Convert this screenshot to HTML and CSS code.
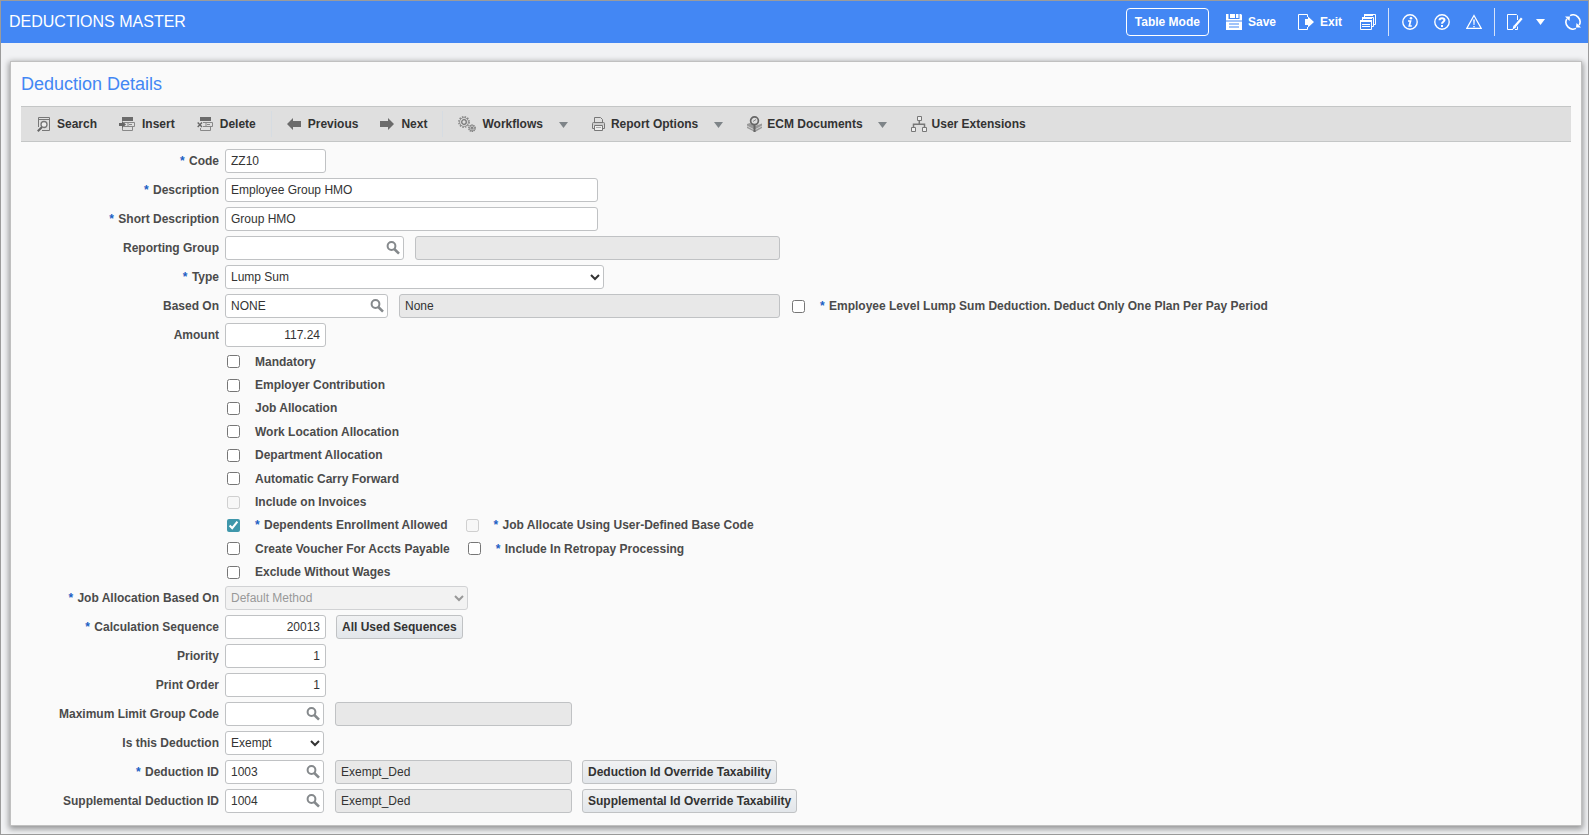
FILE: index.html
```html
<!DOCTYPE html>
<html lang="en">
<head>
<meta charset="utf-8">
<title>Deductions Master</title>
<link rel="stylesheet" href="styles.css">
</head>
<body>
<div class="app">
  <header class="topbar">
    <h1 class="topbar-title">DEDUCTIONS MASTER</h1>
    <nav class="topbar-actions">
      <button class="mode-btn" type="button">Table Mode</button>
      <button class="top-btn" type="button"><svg width="16" height="16" viewBox="0 0 16 16"><path fill="#fff" fill-rule="evenodd" d="M0 0H2.500V5H13.500V0H15L16 1V6.500H0ZM4 0H9V4H4ZM10 0H12.500V4H10ZM0 7.500H16V16H0ZM3 9.500V10.500H13V9.500ZM3 12.500V13.500H13V12.500Z"/></svg>Save</button>
      <button class="top-btn exit" type="button"><svg width="16" height="16" viewBox="0 0 16 16"><path fill="none" stroke="#fff" d="M9.500 3V.5H.5V15.500H9.500V13"/><path fill="#fff" d="M7 5H10V2.500L16 8L10 13.500V11H7Z"/></svg>Exit</button>
      <button class="icon-btn windows" type="button" aria-label="Windows"><svg width="16" height="16" viewBox="0 0 16 16"><path fill="none" stroke="#fff" d="M4.500 4V.5H15.500V10.500H13.500M2.500 6V3.500H13.500V12.500H12"/><path fill="#fff" d="M4 0H13V2H4ZM2 3H12V5H2ZM0 6H12V8H0Z"/><path fill="none" stroke="#fff" d="M.5 6.500V15.500H11.500V6.500M2 10.500H10M2 12.500H10"/></svg></button>
      <span class="top-sep"></span>
      <button class="icon-btn" type="button" aria-label="Information"><svg width="16" height="16" viewBox="0 0 16 16"><circle cx="8" cy="8" r="7.200" fill="none" stroke="#fff" stroke-width="1.400"/><circle cx="9" cy="4.200" r="1.300" fill="#fff"/><path fill="none" stroke="#fff" stroke-width="1.700" d="M6 7H8.500L7.300 12H9.800"/></svg></button>
      <button class="icon-btn" type="button" aria-label="Help"><svg width="16" height="16" viewBox="0 0 16 16"><circle cx="8" cy="8" r="7.200" fill="none" stroke="#fff" stroke-width="1.400"/><path fill="none" stroke="#fff" stroke-width="2" d="M5.500 6.200C5.500 3.400 10.500 3.500 10.500 6.100C10.500 7.800 8 7.700 8 9.800"/><path fill="#fff" d="M7 11H9V13H7Z"/></svg></button>
      <button class="icon-btn" type="button" aria-label="Warnings"><svg width="16" height="16" viewBox="0 0 16 16"><path fill="none" stroke="#fff" stroke-width="1.200" d="M8 1.500L15.200 14.400H.8Z"/><path fill="#fff" d="M7.200 5.500H8.800L8.500 11H7.500ZM7.300 12H8.700V13.200H7.300Z"/></svg></button>
      <span class="top-sep narrow"></span>
      <button class="edit-btn" type="button" aria-label="Edit"><svg width="16" height="16" viewBox="0 0 16 16"><path fill="none" stroke="#fff" d="M10.500 6V1.500L9.500.5H.5V15.500H6"/><path fill="none" stroke="#fff" stroke-width="2.200" d="M7.500 12.800L14.800 4.200"/><path fill="#fff" d="M5.500 15.500L6.500 11.500L9 13.800Z"/><path fill="none" stroke="#fff" d="M8 15.500H10.500V12.500"/></svg><svg class="edit-caret" width="9" height="6" viewBox="0 0 9 6"><path fill="#fff" d="M0 0H9L4.500 6Z"/></svg></button>
      <button class="icon-btn" type="button" aria-label="Refresh"><svg width="16" height="16" viewBox="0 0 16 16"><path fill="none" stroke="#fff" stroke-width="1.600" d="M5 1.600A7 7 0 0 1 14.200 11.200M11 14.400A7 7 0 0 1 1.800 4.800"/><path fill="#fff" d="M16 13.500L11 13.500L11.500 9ZM0 2.500L5 2.500L4.500 7Z"/></svg></button>
    </nav>
  </header>

  <main class="card">
    <h2 class="card-title">Deduction Details</h2>
    <div class="toolbar">
      <button class="tool" type="button"><svg width="13" height="15" viewBox="0 0 13 15"><path fill="none" stroke="#777" d="M1.500 10V.5H12.500V13.500H5"/><path stroke="#777" d="M2 2.500H12"/><circle cx="7" cy="7.500" r="3" fill="#eee" stroke="#777" stroke-width="1.300"/><path stroke="#666" stroke-width="2" d="M5 10L.8 14.200"/></svg>Search</button>
      <button class="tool" type="button"><svg width="16" height="14" viewBox="0 0 16 14"><path fill="#6b6b6b" d="M3 0H14V4H3Z"/><path fill="none" stroke="#888" d="M5 5.500H15.500V9.500H5M3.500 10V13.500H13.500V10M9 5V10M10 7.500H13"/><path fill="#666" d="M0 6H3V4L7 7.500L3 11V9H0Z"/></svg>Insert</button>
      <button class="tool" type="button"><svg width="16" height="14" viewBox="0 0 16 14"><path fill="#6b6b6b" d="M3 0H14V4H3Z"/><path fill="none" stroke="#888" d="M6 5.500H15.500V9.500H6M3.500 11V13.500H13.500V10M9 5V10M10 7.500H13"/><path fill="none" stroke="#666" stroke-width="1.400" d="M.7 5.500L5 10M5 5.500L.7 10"/></svg>Delete</button>
      <span class="tool-sep"></span>
      <button class="tool" type="button"><svg width="14" height="12" viewBox="0 0 14 12"><path fill="#6b6b6b" d="M0 6L6 0V3H14V9H6V12Z"/></svg>Previous</button>
      <button class="tool" type="button"><svg width="14" height="12" viewBox="0 0 14 12"><path fill="#6b6b6b" d="M14 6L8 0V3H0V9H8V12Z"/></svg>Next</button>
      <span class="tool-sep"></span>
      <button class="tool tight" type="button"><svg width="18" height="16" viewBox="0 0 18 16"><circle cx="6" cy="6" r="5.200" fill="none" stroke="#888" stroke-width="1.500" stroke-dasharray="1.500 1.220"/><circle cx="6" cy="6" r="4.400" fill="none" stroke="#888" stroke-width=".8"/><circle cx="6" cy="6" r="2.300" fill="none" stroke="#777" stroke-width="1.300"/><circle cx="14" cy="12.200" r="3.200" fill="none" stroke="#777" stroke-width="1.300" stroke-dasharray="1.300 .71"/><circle cx="14" cy="12.200" r="2.500" fill="none" stroke="#888" stroke-width=".8"/><circle cx="14" cy="12.200" r="1" fill="none" stroke="#666"/></svg>Workflows<svg class="caret" width="9" height="6" viewBox="0 0 9 6"><path fill="#7e8488" d="M0 0H9L4.500 6Z"/></svg></button>
      <button class="tool tight" type="button"><svg width="13" height="14" viewBox="0 0 13 14"><path fill="none" stroke="#777" d="M2.500 5V.5H8.500L10.500 2.500V5M2.500 11.500H.5V6.500Q.5 5.500 1.500 5.500H11.500Q12.500 5.500 12.500 6.500V11.500H10.500"/><path fill="#ccc" d="M1 6H12V8H1Z"/><path fill="#eee" stroke="#777" d="M2.500 8.500H10.500V13.500H2.500Z"/><path stroke="#aaa" d="M4 10.500H9"/></svg>Report Options<svg class="caret" width="9" height="6" viewBox="0 0 9 6"><path fill="#7e8488" d="M0 0H9L4.500 6Z"/></svg></button>
      <button class="tool snug" type="button"><svg width="15" height="16" viewBox="0 0 15 16"><path fill="#999" d="M0 8L3 7L8 10L15 7.500V12L8 16L0 12Z"/><path fill="none" stroke="#ddd" stroke-width=".8" d="M0 10L7.500 14L15 10"/><circle cx="7.500" cy="4.800" r="3.900" fill="#ddd" stroke="#666" stroke-width="1.700"/><path fill="none" stroke="#888" d="M6 5.500L9 3.500"/><path stroke="#666" stroke-width="2" d="M7.500 8.500V16"/></svg>ECM Documents<svg class="caret" width="9" height="6" viewBox="0 0 9 6"><path fill="#7e8488" d="M0 0H9L4.500 6Z"/></svg></button>
      <button class="tool snug" type="button"><svg width="16" height="16" viewBox="0 0 16 16"><path fill="#eee" stroke="#777" d="M6.500.5H10.500V4.500H6.500ZM.5 11.500H4.500V15.500H.5ZM11.500 11.500H15.500V15.500H11.500Z"/><path fill="none" stroke="#777" stroke-width="1.500" d="M8.300 5V8M2.500 11V8.200H13.500V11"/></svg>User Extensions</button>
    </div>

    <form class="form">
      <div class="row"><label class="lbl req" for="code">Code</label><input class="field w-code" id="code" type="text" value="ZZ10"></div>
      <div class="row"><label class="lbl req" for="desc">Description</label><input class="field w-desc" id="desc" type="text" value="Employee Group HMO"></div>
      <div class="row"><label class="lbl req" for="sdesc">Short Description</label><input class="field w-desc" id="sdesc" type="text" value="Group HMO"></div>
      <div class="row"><label class="lbl" for="rgroup">Reporting Group</label><span class="lookup w-rgroup"><input class="field" id="rgroup" type="text"><button class="lens" type="button" aria-label="Find reporting group"><svg width="14" height="14" viewBox="0 0 14 14"><circle cx="5.500" cy="5" r="3.900" fill="none" stroke="#85898c" stroke-width="2"/><path stroke="#85898c" stroke-width="2.600" d="M8.300 8L13 12.700"/></svg></button></span><input class="field shown w-rname" type="text" aria-label="Reporting group name" readonly></div>
      <div class="row"><label class="lbl req" for="type">Type</label><select class="field w-type" id="type"><option>Lump Sum</option></select></div>
      <div class="row"><label class="lbl" for="based">Based On</label><span class="lookup w-based"><input class="field" id="based" type="text" value="NONE"><button class="lens" type="button" aria-label="Find based on"><svg width="14" height="14" viewBox="0 0 14 14"><circle cx="5.500" cy="5" r="3.900" fill="none" stroke="#85898c" stroke-width="2"/><path stroke="#85898c" stroke-width="2.600" d="M8.300 8L13 12.700"/></svg></button></span><input class="field shown w-bname" type="text" aria-label="Based on name" value="None" readonly><label class="check lump"><input type="checkbox"><span class="req">Employee Level Lump Sum Deduction. Deduct Only One Plan Per Pay Period</span></label></div>
      <div class="row"><label class="lbl" for="amount">Amount</label><input class="field num w-code" id="amount" type="text" value="117.24"></div>

      <div class="checks">
        <div class="check-row"><label class="check"><input type="checkbox"><span>Mandatory</span></label></div>
        <div class="check-row"><label class="check"><input type="checkbox"><span>Employer Contribution</span></label></div>
        <div class="check-row"><label class="check"><input type="checkbox"><span>Job Allocation</span></label></div>
        <div class="check-row"><label class="check"><input type="checkbox"><span>Work Location Allocation</span></label></div>
        <div class="check-row"><label class="check"><input type="checkbox"><span>Department Allocation</span></label></div>
        <div class="check-row"><label class="check"><input type="checkbox"><span>Automatic Carry Forward</span></label></div>
        <div class="check-row"><label class="check"><input type="checkbox" disabled><span>Include on Invoices</span></label></div>
        <div class="check-row"><label class="check"><input type="checkbox" checked><span class="req">Dependents Enrollment Allowed</span></label><label class="check"><input type="checkbox" disabled><span class="req">Job Allocate Using User-Defined Base Code</span></label></div>
        <div class="check-row"><label class="check"><input type="checkbox"><span>Create Voucher For Accts Payable</span></label><label class="check"><input type="checkbox"><span class="req">Include In Retropay Processing</span></label></div>
        <div class="check-row"><label class="check"><input type="checkbox"><span>Exclude Without Wages</span></label></div>
      </div>

      <div class="row"><label class="lbl req" for="jalloc">Job Allocation Based On</label><select class="field w-jalloc" id="jalloc" disabled><option>Default Method</option></select></div>
      <div class="row"><label class="lbl req" for="seq">Calculation Sequence</label><input class="field num w-code" id="seq" type="text" value="20013"><button class="btn" type="button">All Used Sequences</button></div>
      <div class="row"><label class="lbl" for="prio">Priority</label><input class="field num w-code" id="prio" type="text" value="1"></div>
      <div class="row"><label class="lbl" for="porder">Print Order</label><input class="field num w-code" id="porder" type="text" value="1"></div>
      <div class="row"><label class="lbl" for="maxlim">Maximum Limit Group Code</label><span class="lookup w-id"><input class="field" id="maxlim" type="text"><button class="lens" type="button" aria-label="Find limit group"><svg width="14" height="14" viewBox="0 0 14 14"><circle cx="5.500" cy="5" r="3.900" fill="none" stroke="#85898c" stroke-width="2"/><path stroke="#85898c" stroke-width="2.600" d="M8.300 8L13 12.700"/></svg></button></span><input class="field shown w-idname" type="text" aria-label="Limit group name" readonly></div>
      <div class="row"><label class="lbl" for="isded">Is this Deduction</label><select class="field w-id" id="isded"><option>Exempt</option></select></div>
      <div class="row"><label class="lbl req" for="dedid">Deduction ID</label><span class="lookup w-id"><input class="field" id="dedid" type="text" value="1003"><button class="lens" type="button" aria-label="Find deduction"><svg width="14" height="14" viewBox="0 0 14 14"><circle cx="5.500" cy="5" r="3.900" fill="none" stroke="#85898c" stroke-width="2"/><path stroke="#85898c" stroke-width="2.600" d="M8.300 8L13 12.700"/></svg></button></span><input class="field shown w-idname" type="text" aria-label="Deduction name" value="Exempt_Ded" readonly><button class="btn" type="button">Deduction Id Override Taxability</button></div>
      <div class="row"><label class="lbl" for="supid">Supplemental Deduction ID</label><span class="lookup w-id"><input class="field" id="supid" type="text" value="1004"><button class="lens" type="button" aria-label="Find supplemental deduction"><svg width="14" height="14" viewBox="0 0 14 14"><circle cx="5.500" cy="5" r="3.900" fill="none" stroke="#85898c" stroke-width="2"/><path stroke="#85898c" stroke-width="2.600" d="M8.300 8L13 12.700"/></svg></button></span><input class="field shown w-idname" type="text" aria-label="Supplemental deduction name" value="Exempt_Ded" readonly><button class="btn" type="button">Supplemental Id Override Taxability</button></div>
    </form>
  </main>
</div>
</body>
</html>
```

FILE: styles.css
```css
* { box-sizing: border-box; }

body {
  margin: 0;
  font: 12px "Liberation Sans", Arial, sans-serif;
  color: #333;
}

button, input, select { font: inherit; color: inherit; margin: 0; }
svg { display: block; flex: none; }

.app {
  min-height: 100vh;
  border: 1px solid #9b9b9b;
  background: #f1f2f4;
  display: flex;
  flex-direction: column;
}

/* Top bar */
.topbar {
  display: flex;
  align-items: center;
  justify-content: space-between;
  min-height: 42px;
  padding: 0 7px 0 8px;
  background: #4387f4;
  color: #fff;
}
.topbar-title { margin: 0; font-size: 16px; font-weight: normal; }
.topbar-actions { display: flex; align-items: center; gap: 16px; }
.topbar-actions button {
  display: flex;
  align-items: center;
  padding: 0;
  border: 0;
  background: none;
  color: #fff;
  font-weight: bold;
}
.topbar-actions .mode-btn {
  height: 28px;
  padding: 0 8px;
  border: 1px solid #fff;
  border-radius: 4px;
  margin-right: 1px;
}
.topbar-actions .top-btn { gap: 6px; }
.topbar-actions .exit { margin-left: 6px; }
.windows { margin: 0 -4px 0 2px; }
.top-sep { width: 1px; height: 28px; background: #d5e2fa; margin-right: -3px; }
.top-sep.narrow { margin: 0 -4px; }
.edit-btn { gap: 13px; }
.edit-caret { margin-right: 4px; }

/* Card */
.card {
  flex: 1;
  margin: 18px 6px 8px 9px;
  padding: 13px 10px 12px;
  background: #fafafa;
  border: 1px solid #c0c0c0;
  box-shadow: 0 2px 6px 1px rgba(0, 0, 0, .4);
}
.card-title {
  margin: 0 0 13px;
  font-size: 18px;
  line-height: 18px;
  font-weight: normal;
  color: #4387f4;
}

/* Toolbar */
.toolbar {
  display: flex;
  align-items: center;
  gap: 22px;
  height: 36px;
  padding-left: 16px;
  background: #dfdfdf;
  border: solid #c4c6c6;
  border-width: 1px 0;
}
.tool {
  display: flex;
  align-items: center;
  gap: 7px;
  padding: 0;
  border: 0;
  background: none;
  font-weight: bold;
}
.tool.tight { gap: 6px; }
.tool.snug { gap: 5px; }
.tool-sep { width: 1px; height: 26px; background: #d6dce2; margin: 0 -7px; }
.caret { margin: 2px 2px 0 10px; }

/* Form */
.form { display: flex; flex-direction: column; gap: 5px; padding-top: 7px; }
.row { display: flex; align-items: center; height: 24px; }
.lbl {
  width: 198px;
  margin-right: 6px;
  text-align: right;
  font-weight: bold;
  color: #4b4b4b;
}
.req::before {
  content: "* ";
  margin-right: 1px;
  color: #1c5fc4;
  white-space: pre;
}

.field {
  height: 24px;
  padding: 0 5px;
  border: 1px solid #c0c2c4;
  border-radius: 3px;
  background: #fff;
}
select.field { padding: 0 1px; }
select.field:disabled { background: #efefef; color: #707070; }
.num { text-align: right; }
.shown { background: #e8e8e8; margin-left: 11px; }
.lookup { display: flex; position: relative; }
.lookup .field { width: 100%; }
.lens {
  position: absolute;
  top: 5px;
  right: 4px;
  padding: 0;
  border: 0;
  background: none;
}

.w-code { width: 101px; }
.w-desc { width: 373px; }
.w-rgroup { width: 179px; }
.w-rname { width: 365px; }
.w-type { width: 379px; }
.w-based { width: 163px; }
.w-bname { width: 381px; }
.w-jalloc { width: 243px; }
.w-id { width: 99px; }
.w-idname { width: 237px; }

.btn {
  height: 24px;
  margin-left: 10px;
  padding: 0 5px;
  border: 1px solid #c0c2c4;
  border-radius: 3px;
  background: linear-gradient(#f1f2f3, #e2e6ea);
  font-weight: bold;
}

/* Tick boxes */
.checks {
  display: grid;
  grid-auto-rows: 1fr;
  height: 234px;
  margin: -2px 0 -3px;
  padding-left: 206px;
}
.check-row { display: flex; align-items: center; gap: 18px; }
.check {
  display: flex;
  align-items: center;
  gap: 15px;
  font-weight: bold;
  color: #4b4b4b;
}
.check input { width: 13px; height: 13px; accent-color: #3f97ab; }
.lump { margin-left: 12px; }
```
